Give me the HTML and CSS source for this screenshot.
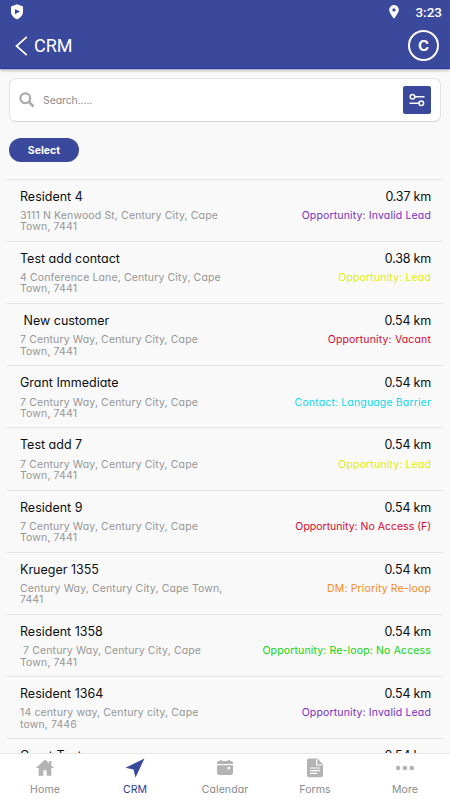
FILE: index.html
```html
<!DOCTYPE html>
<html lang="en">
<head>
  <meta charset="UTF-8">
  <meta name="viewport" content="width=device-width, initial-scale=1">
  <title>CRM</title>
  <link rel="stylesheet" href="styles.css">
</head>
<body>
  <div class="app">
    <header class="header">
      <div class="status-bar">
        <svg class="shield" width="14" height="16" viewBox="0 0 14 16"><path fill="#fff" d="M7 .3 13 2.6v5.2c0 3.500-2.500 6-6 7.700-3.500-1.700-6-4.200-6-7.700V2.600z"/><path fill="#3b499c" d="M5 5v5.200l5-2.600z"/></svg>
        <div class="status-right">
          <svg width="10" height="14" viewBox="0 0 10 14"><path fill="#fff" fill-rule="evenodd" d="M5 0a4.800 4.800 0 0 0-4.800 4.800C.2 8.300 5 13.700 5 13.700s4.800-5.400 4.800-8.900A4.800 4.800 0 0 0 5 0zm0 3.200a1.700 1.700 0 1 1 0 3.400 1.700 1.700 0 0 1 0-3.400z"/></svg>
          <span class="time">3:23</span>
        </div>
      </div>
      <div class="title-bar">
        <svg width="13" height="20" viewBox="0 0 13 20"><path d="M11.800 .8 1.500 10l10.300 9.200" fill="none" stroke="#fff" stroke-width="1.700"/></svg>
        <h1>CRM</h1>
        <div class="avatar">C</div>
      </div>
    </header>

    <main class="content">
      <div class="search-box">
        <svg width="16" height="16" viewBox="0 0 16 16"><circle cx="6.300" cy="6.300" r="4.900" fill="none" stroke="#aaa" stroke-width="2.200"/><path d="m10 10 4.600 4.600" stroke="#aaa" stroke-width="2.600"/></svg>
        <span class="placeholder">Search.....</span>
        <button class="filter-btn" aria-label="Filter">
          <svg width="16" height="14" viewBox="0 0 16 14" fill="none" stroke="#fff" stroke-width="1.500"><circle cx="3.500" cy="3.700" r="2.300"/><path d="M6 3.700h9.500M.5 10.300H10"/><circle cx="12.300" cy="10.300" r="2.300"/></svg>
        </button>
      </div>

      <button class="select-btn">Select</button>

      <div class="list">
        <div class="row">
          <div><div class="name">Resident 4</div><div class="address">3111 N Kenwood St, Century City, Cape<br>Town, 7441</div></div>
          <div class="right"><div class="distance">0.37 km</div><div class="status purple">Opportunity: Invalid Lead</div></div>
        </div>
        <div class="row">
          <div><div class="name">Test add contact</div><div class="address">4 Conference Lane, Century City, Cape<br>Town, 7441</div></div>
          <div class="right"><div class="distance">0.38 km</div><div class="status yellow">Opportunity: Lead</div></div>
        </div>
        <div class="row">
          <div><div class="name">&nbsp;New customer</div><div class="address">7 Century Way, Century City, Cape<br>Town, 7441</div></div>
          <div class="right"><div class="distance">0.54 km</div><div class="status red">Opportunity: Vacant</div></div>
        </div>
        <div class="row">
          <div><div class="name">Grant Immediate</div><div class="address">7 Century Way, Century City, Cape<br>Town, 7441</div></div>
          <div class="right"><div class="distance">0.54 km</div><div class="status cyan">Contact: Language Barrier</div></div>
        </div>
        <div class="row">
          <div><div class="name">Test add 7</div><div class="address">7 Century Way, Century City, Cape<br>Town, 7441</div></div>
          <div class="right"><div class="distance">0.54 km</div><div class="status yellow">Opportunity: Lead</div></div>
        </div>
        <div class="row">
          <div><div class="name">Resident 9</div><div class="address">7 Century Way, Century City, Cape<br>Town, 7441</div></div>
          <div class="right"><div class="distance">0.54 km</div><div class="status red tight">Opportunity: No Access (F)</div></div>
        </div>
        <div class="row">
          <div><div class="name">Krueger 1355</div><div class="address">Century Way, Century City, Cape Town,<br>7441</div></div>
          <div class="right"><div class="distance">0.54 km</div><div class="status orange">DM: Priority Re-loop</div></div>
        </div>
        <div class="row">
          <div><div class="name">Resident 1358</div><div class="address">&nbsp;7 Century Way, Century City, Cape<br>Town, 7441</div></div>
          <div class="right"><div class="distance">0.54 km</div><div class="status green">Opportunity: Re-loop: No Access</div></div>
        </div>
        <div class="row">
          <div><div class="name">Resident 1364</div><div class="address">14 century way, Century city, Cape<br>town, 7446</div></div>
          <div class="right"><div class="distance">0.54 km</div><div class="status purple">Opportunity: Invalid Lead</div></div>
        </div>
        <div class="row">
          <div><div class="name">Grant Test</div></div>
          <div class="right"><div class="distance">0.54 km</div></div>
        </div>
      </div>
    </main>

    <nav class="tabs">
      <a class="tab">
        <svg width="20" height="20" viewBox="0 0 20 20"><path fill="#b3b3b3" d="M10 1.500 1 10h2.700v7.700h4.600v-5.500h3.400v5.500h4.600V10H19l-2.700-2.600V3h-2.200v2.300z"/></svg>
        <span>Home</span>
      </a>
      <a class="tab active">
        <svg width="20" height="20" viewBox="0 0 20 20"><path fill="#3b499c" d="M19.500 .5 .5 9.700l8 1.800 2 8z"/></svg>
        <span>CRM</span>
      </a>
      <a class="tab">
        <svg width="20" height="20" viewBox="0 0 20 20"><path fill="#b3b3b3" d="M4 3h1V2h2v1h6V2h2v1h1q2 0 2 2v1H2V5q0-2 2-2zM2 7.200h16V15q0 2-2 2H4q-2 0-2-2z"/><path fill="#fff" d="M12.500 9h2.500v2.300h-2.500z"/></svg>
        <span>Calendar</span>
      </a>
      <a class="tab">
        <svg width="20" height="20" viewBox="0 0 20 20"><path fill="#b3b3b3" d="M4 .5h8.500l5.500 6V17q0 2.200-2.200 2.200H4.200Q2 19.200 2 17V2.500Q2 .5 4 .5z"/><path fill="none" stroke="#fff" stroke-width="1.200" d="M11.700 1.500V7H17M5 10h10M5 12.700h10M5 15.400h7"/></svg>
        <span>Forms</span>
      </a>
      <a class="tab">
        <svg width="20" height="20" viewBox="0 0 20 20" fill="#b3b3b3"><circle cx="3.200" cy="10" r="2.300"/><circle cx="10" cy="10" r="2.300"/><circle cx="16.800" cy="10" r="2.300"/></svg>
        <span>More</span>
      </a>
    </nav>
  </div>
</body>
</html>
```
FILE: styles.css
```css
* {
    box-sizing: border-box;
}

body {
    margin: 0;
    background: #f9f9f9;
    font-family: Inter, "Open Sans", sans-serif;
    font-feature-settings: "cv11";
}

svg {
    display: block;
}

button {
    border: none;
    padding: 0;
    font-family: inherit;
}

.app {
    height: 800px;
    display: flex;
    flex-direction: column;
    overflow: hidden;
}

.header {
    flex: none;
    height: 69px;
    background: #3b499c;
    border-bottom: 1px solid #2536a0;
    color: #fff;
    font-family: Roboto, sans-serif;
    box-shadow: 0 1px 3px rgba(0, 0, 0, 0.4);
}

.status-bar {
    height: 23px;
    padding: 0 8px 0 10px;
    display: flex;
    align-items: center;
    justify-content: space-between;
}

.status-right {
    display: flex;
    align-items: center;
    gap: 16px;
}

.time {
    font-size: 13.500px;
    font-weight: 500;
    line-height: 24px;
}

.title-bar {
    height: 45px;
    padding: 0 11px 0 15px;
    display: flex;
    align-items: center;
}

.title-bar h1 {
    flex: 1;
    margin: 0 0 0 6px;
    font-size: 18px;
    font-weight: 400;
}

.avatar {
    width: 31px;
    height: 31px;
    border: 2px solid #fff;
    border-radius: 50%;
    font: 700 15px/27px Inter, sans-serif;
    text-align: center;
}

.content {
    flex: 1;
    min-height: 0;
    overflow: hidden;
    padding-top: 9px;
}

.search-box {
    height: 44px;
    margin: 0 9px;
    padding: 0 9px;
    display: flex;
    align-items: center;
    background: #fff;
    border: 1px solid #e3e3e3;
    border-bottom-color: #d5d5d5;
    border-radius: 7px;
}

.placeholder {
    flex: 1;
    margin-left: 8px;
    color: #8c8c8c;
    font-size: 10.500px;
    letter-spacing: -0.1px;
}

.filter-btn {
    width: 28px;
    height: 28px;
    display: flex;
    align-items: center;
    justify-content: center;
    background: #3b499c;
    border-radius: 2px;
}

.select-btn {
    display: block;
    width: 70px;
    height: 24px;
    margin: 16px 0 0 9px;
    background: #3b499c;
    border-radius: 12px;
    color: #fff;
    font-size: 10.500px;
    font-weight: 700;
}

.list {
    margin: 16.600px 7px 0;
}

.row {
    height: 62.200px;
    padding: 8px 12px 0 13px;
    display: flex;
    justify-content: space-between;
    border-top: 1px solid #e2e2e2;
    white-space: nowrap;
}

.right {
    text-align: right;
}

.name,
.distance {
    color: #0c0f14;
    font-size: 12.500px;
    line-height: 17px;
}

.distance {
    letter-spacing: -0.2px;
}

.address {
    margin-top: 5.400px;
    color: #969696;
    font-size: 10.500px;
    line-height: 11.300px;
    letter-spacing: 0.130px;
}

.status {
    margin-top: 5.400px;
    font-size: 10.500px;
    line-height: 11.300px;
    letter-spacing: 0.150px;
}

.status.tight {
    letter-spacing: 0;
}

.purple { color: #7b2fbe; }
.yellow { color: #e2ec0c; }
.red { color: #d50a30; }
.cyan { color: #10d8ea; }
.orange { color: #f98b1c; }
.green { color: #0fd40f; }

.tabs {
    flex: none;
    height: 47px;
    display: flex;
    background: #fff;
    border-top: 1px solid #e8e8e8;
}

.tab {
    flex: 1;
    padding-top: 4px;
    display: flex;
    flex-direction: column;
    align-items: center;
    gap: 4px;
    color: #8a8a8a;
    font-size: 10.500px;
    line-height: 15px;
    letter-spacing: 0.1px;
}

.tab.active {
    color: #2b3a98;
}
```
